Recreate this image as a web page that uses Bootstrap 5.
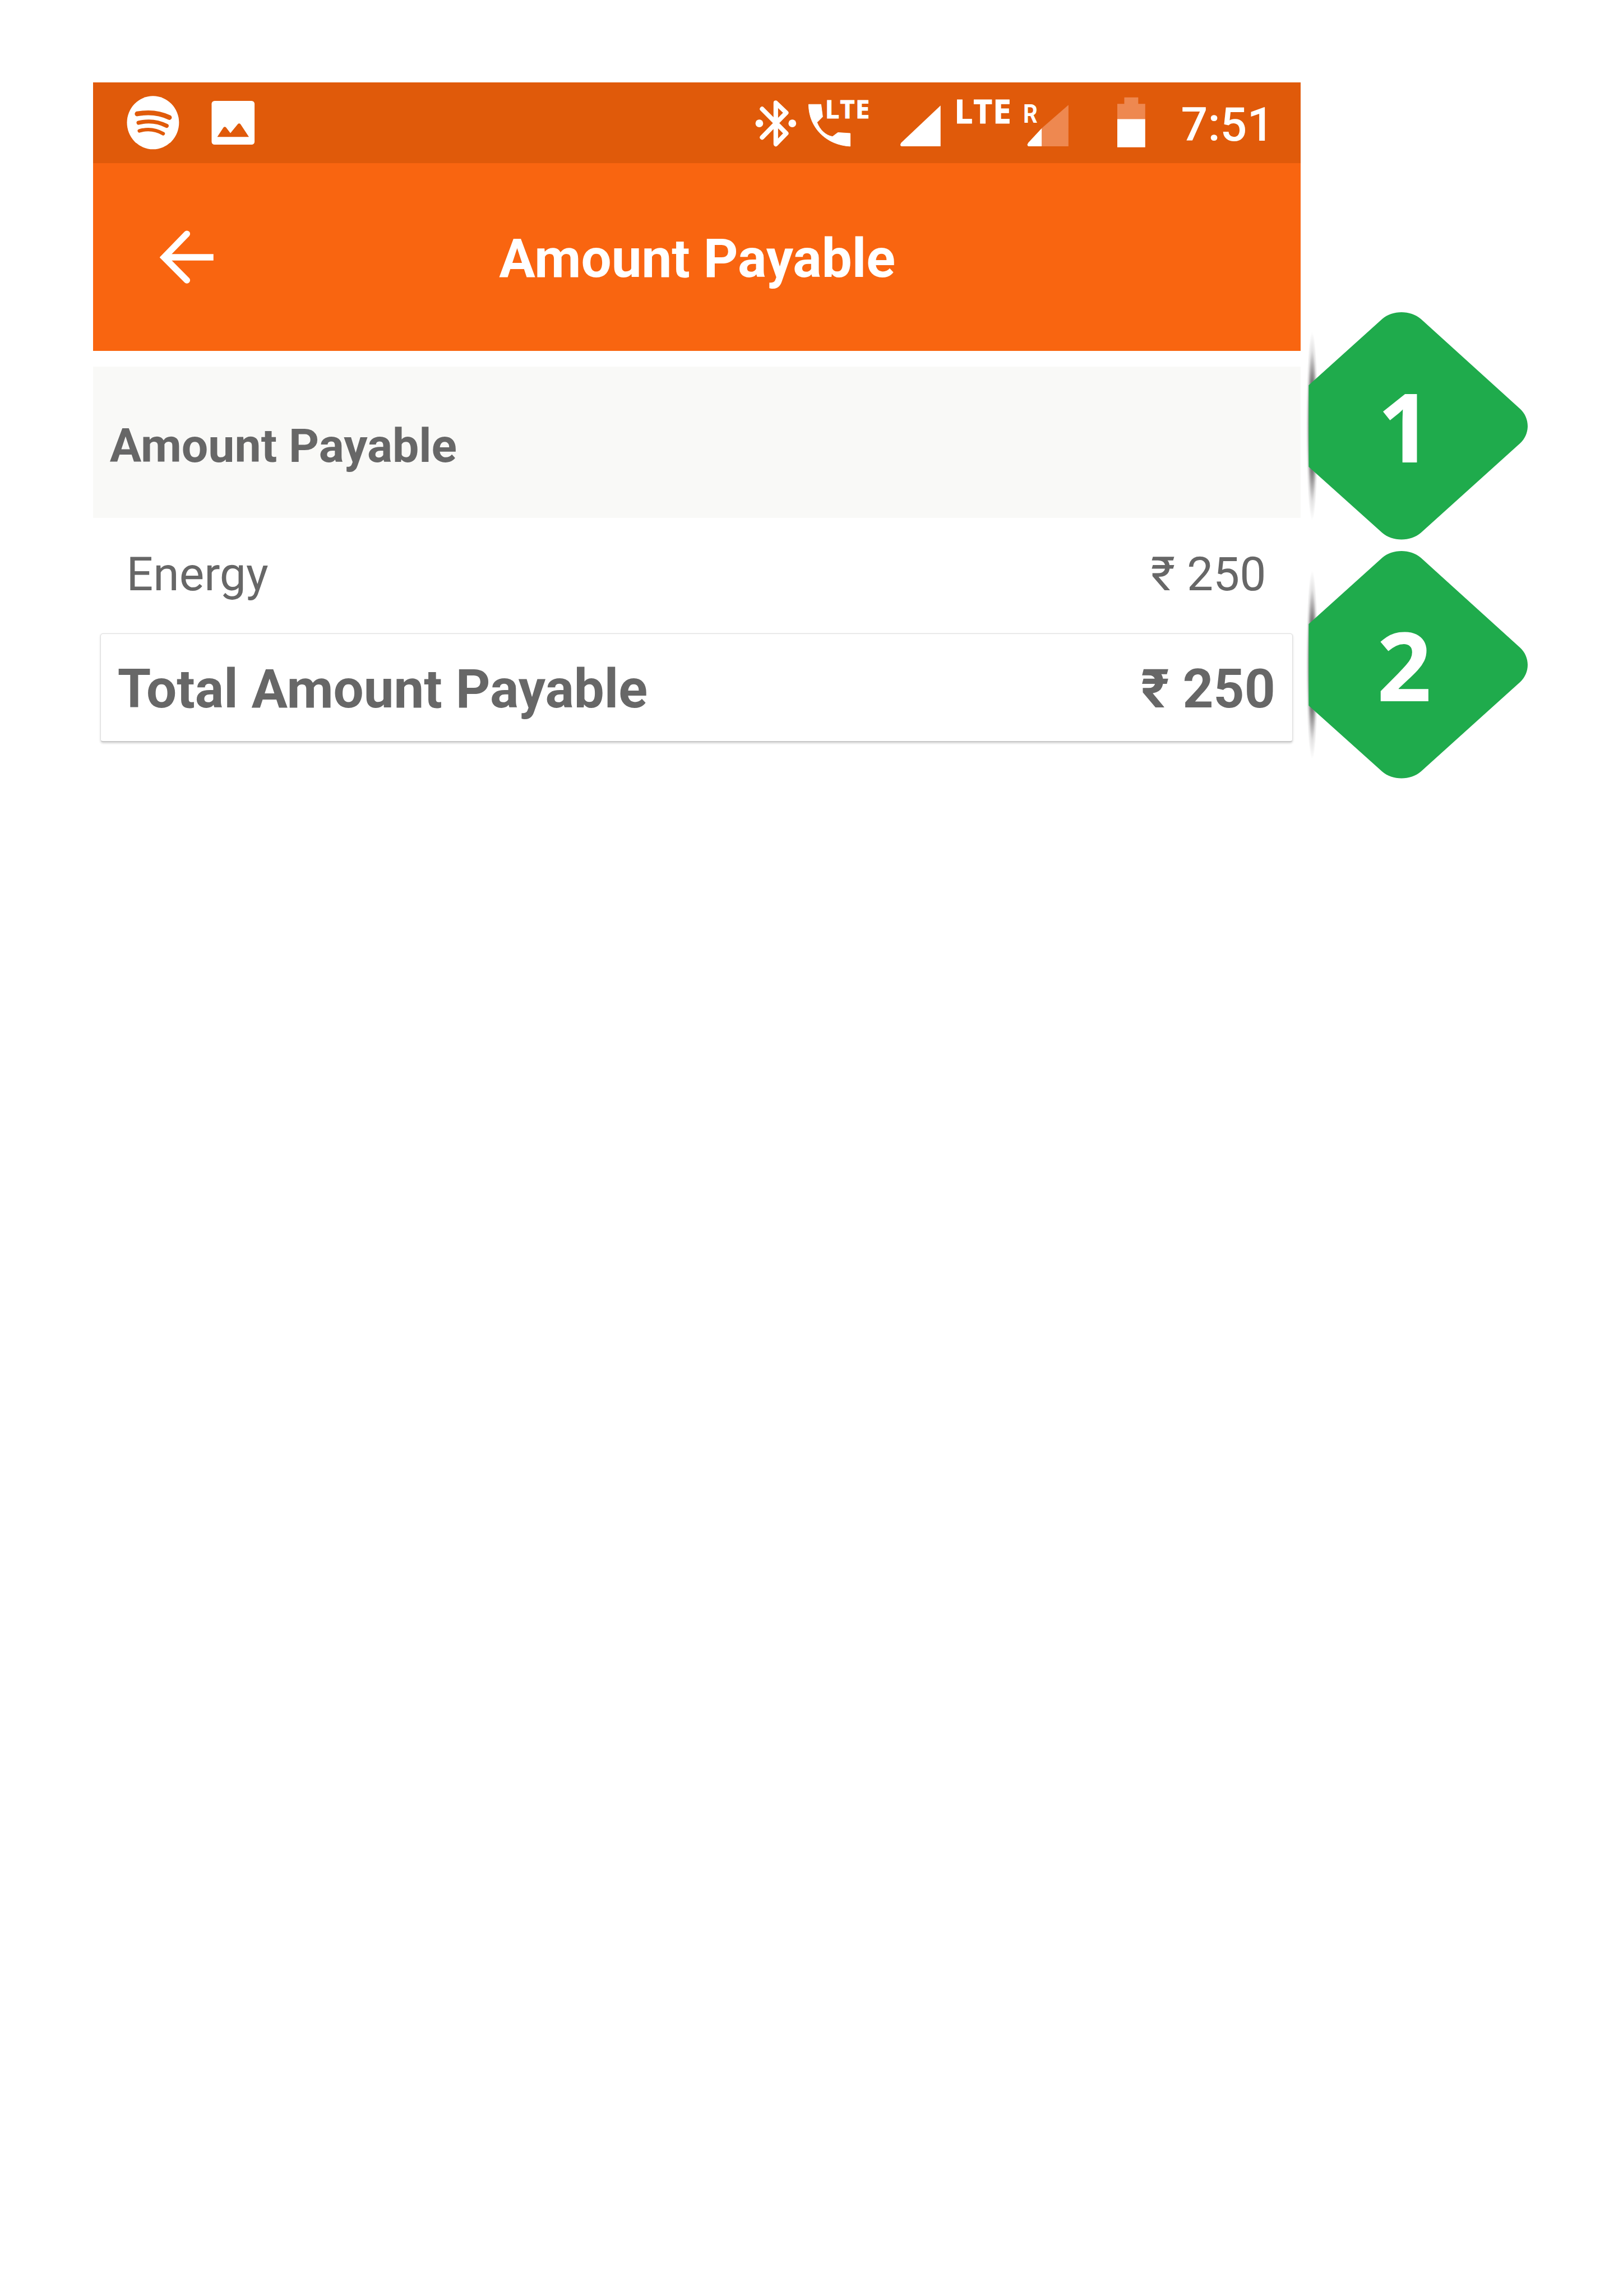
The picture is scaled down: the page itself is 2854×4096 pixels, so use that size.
<!DOCTYPE html>
<html lang="en">
<head>
<meta charset="utf-8">
<meta name="viewport" content="width=device-width, initial-scale=1">
<title>Amount Payable</title>
<link href="https://cdn.jsdelivr.net/npm/bootstrap@5.3.0/dist/css/bootstrap.min.css" rel="stylesheet">
<style>
  /* 1rem = 100 design units; the design sheet is 29.81rem wide */
  html { font-size: 95.74px; }
  body { font-family: Roboto, "Liberation Sans", sans-serif; line-height: 1; color: #676767; background: #fff; overflow: hidden; }
  .sheet { padding: 1.54rem 0 0 1.73rem; min-height: 4096px; }
  .phone { width: 22.5rem; }
  .statusbar { height: 1.5rem; background: #e05a0a; padding: 0 .495rem 0 .63rem; }
  .statusbar svg { height: 1.5rem; flex: none; display: block; }
  .clock { font-size: .88rem; font-weight: 500; padding-top: .35rem; margin-left: .665rem; white-space: nowrap; }
  .appbar { height: 3.5rem; background: #f96510; padding-left: 1.25rem; }
  .back-icon { width: 1rem; height: 1rem; margin-top: 1.25rem; }
  .app-title { font-size: 1.003rem; font-weight: 700; margin: 0 0 0 5.32rem; padding-top: 1.276rem; line-height: 1; }
  .section-head { height: 2.82rem; margin-top: .29rem; background: #f9f9f7; padding: 1.05rem 0 0 .315rem; font-size: .879rem; font-weight: 700; line-height: 1; }
  .line-item { height: 2.15rem; padding: .614rem .64rem 0 .626rem; font-size: .877rem; }
  .total-card { height: 2.03rem; margin: 0 .14rem 0 .14rem; padding: .53rem .32rem 0 .31rem; font-size: 1.003rem; font-weight: 700;
    border: .02rem solid #dedede; border-bottom: .03rem solid #c9c9c9; border-radius: .05rem; background: #fff;
    box-shadow: 0 .02rem .04rem rgba(0,0,0,.16); }
  .markers { padding-top: 4.175rem; }
  .marker-pin { width: 4.27rem; height: 4.45rem; display: block; }
  .marker-pin text { font-family: "Open Sans", "Noto Sans", sans-serif; font-weight: 700; font-size: 178px; fill: #fff; }
  .net { font-family: "Open Sans", sans-serif; font-weight: 700; fill: #fff; stroke: #fff; stroke-width: 1px; }
</style>
</head>
<body>
<svg width="0" height="0" class="position-absolute" aria-hidden="true">
  <defs>
    <radialGradient id="fold">
      <stop offset="0" stop-color="#3a3638"/>
      <stop offset=".35" stop-color="#3a3638" stop-opacity=".85"/>
      <stop offset=".55" stop-color="#3a3638" stop-opacity=".55"/>
      <stop offset=".8" stop-color="#3a3638" stop-opacity=".14"/>
      <stop offset="1" stop-color="#3a3638" stop-opacity="0"/>
    </radialGradient>
    <g id="pin">
      <ellipse cx="2444.5" cy="794" rx="11.500" ry="176" fill="url(#fold)"/>
      <path fill="#1fab4c" d="M2438 718 2575 594.5C2593.7 577.8 2628 577.8 2647 594.5L2832 762C2850.7 779 2850.7 809 2832 826L2647 993C2628 1009.8 2593.7 1009.8 2575 993L2438 870Z"/>
    </g>
  </defs>
</svg>

<main class="sheet d-flex align-items-start">
  <section class="phone">
    <div class="statusbar d-flex align-items-start text-white">
      <svg style="width:.98rem" viewBox="237 154 98 150">
        <ellipse cx="286" cy="229" rx="48.5" ry="49.6" fill="#fff"/>
        <g fill="none" stroke="#e05a0a" stroke-linecap="round">
          <path stroke-width="9" d="M256.5 212.6Q290 206.5 316.5 219.5"/>
          <path stroke-width="7.5" d="M259 229.2Q287 222.5 311.5 235"/>
          <path stroke-width="6.5" d="M260.5 244.3Q284 237.5 305 249.5"/>
        </g>
      </svg>
      <svg style="width:.81rem;margin-left:.6rem" viewBox="395 154 81 150">
        <rect x="395.5" y="188.5" width="80" height="81.5" rx="5.5" fill="#fff"/>
        <path fill="#e05a0a" d="M406 255.5 417.5 238Q420 235.5 422.5 238L430.5 248.5 444 232Q446.7 229 449.5 232L465 255.5Z"/>
      </svg>
      <div class="d-flex align-items-start ms-auto">
        <svg style="width:.79rem" viewBox="1405 154 79 150">
          <path fill="none" stroke="#fff" stroke-width="8.5" stroke-linecap="round" stroke-linejoin="round" d="M1419 203.500 1464 249 1444.500 269V192L1464 210.500 1419 256.500"/>
          <circle cx="1413.8" cy="230.3" r="7.2" fill="#fff"/><circle cx="1475.3" cy="230.3" r="7.2" fill="#fff"/>
        </svg>
        <svg style="width:1.16rem;margin-left:.2rem" viewBox="1504 154 116 150">
          <path fill="#fff" stroke="#fff" stroke-width="1" stroke-linejoin="round" d="M1505.500 195H1528.500L1531.500 218 1521 228.500C1526 242 1537 253 1550 255L1560 247.500 1583 249V273C1540 271 1506 240 1505.500 195Z"/>
          <text class="net" x="1536" y="221" font-size="47" textLength="83">LTE</text>
        </svg>
        <svg style="width:.77rem;margin-left:.56rem" viewBox="1676 154 77 150">
          <path fill="#fff" d="M1752 197V273H1680Q1677 273 1677 270L1678.5 266.5Z"/>
        </svg>
        <svg style="width:1.08rem;margin-left:.23rem" viewBox="1776 154 108 150">
          <text class="net" x="1777.4" y="230.7" font-size="61" textLength="106">LTE</text>
        </svg>
        <svg style="width:.86rem;margin-left:.2rem" viewBox="1904 154 86 150">
          <text x="1905" y="229" font-size="49" font-weight="700" fill="#fff" textLength="27" lengthAdjust="spacingAndGlyphs">R</text>
          <path fill="#fff" d="M1940 239V273H1915.5Q1913 273 1913 269.5L1915 266Z"/>
          <path fill="#ee8850" d="M1940 239 1989.5 196V273H1940Z"/>
        </svg>
        <svg style="width:.52rem;margin-left:.91rem" viewBox="2081 154 52 150">
          <path fill="#ee8850" d="M2081 194H2094V182H2120V194H2133V223H2081Z"/>
          <path fill="#fff" d="M2081 222.5H2133V275H2081Z"/>
        </svg>
        <span class="clock">7:51</span>
      </div>
    </div>

    <header class="appbar d-flex align-items-start text-white">
      <svg class="back-icon" viewBox="298 429 100 100" fill="none" stroke="#fff" stroke-width="12">
        <path stroke-linecap="round" d="M348.5 435.5 306 479.2 348.5 522"/>
        <path d="M308 479.2H398"/>
      </svg>
      <h1 class="app-title">Amount Payable</h1>
    </header>

    <h2 class="section-head mb-0">Amount Payable</h2>
    <div class="line-item d-flex justify-content-between align-items-start">
      <span>Energy</span><span>₹ 250</span>
    </div>
    <div class="total-card d-flex justify-content-between align-items-start">
      <span>Total Amount Payable</span><span>₹ 250</span>
    </div>
  </section>

  <aside class="markers">
    <svg class="marker-pin" viewBox="2423 571.5 427 445"><use href="#pin"/><text x="2566" y="862">1</text></svg>
    <svg class="marker-pin" viewBox="2423 571.5 427 445"><use href="#pin"/><text x="2565" y="862">2</text></svg>
  </aside>
</main>
<script src="https://cdn.jsdelivr.net/npm/bootstrap@5.3.0/dist/js/bootstrap.bundle.min.js"></script>
</body>
</html>
